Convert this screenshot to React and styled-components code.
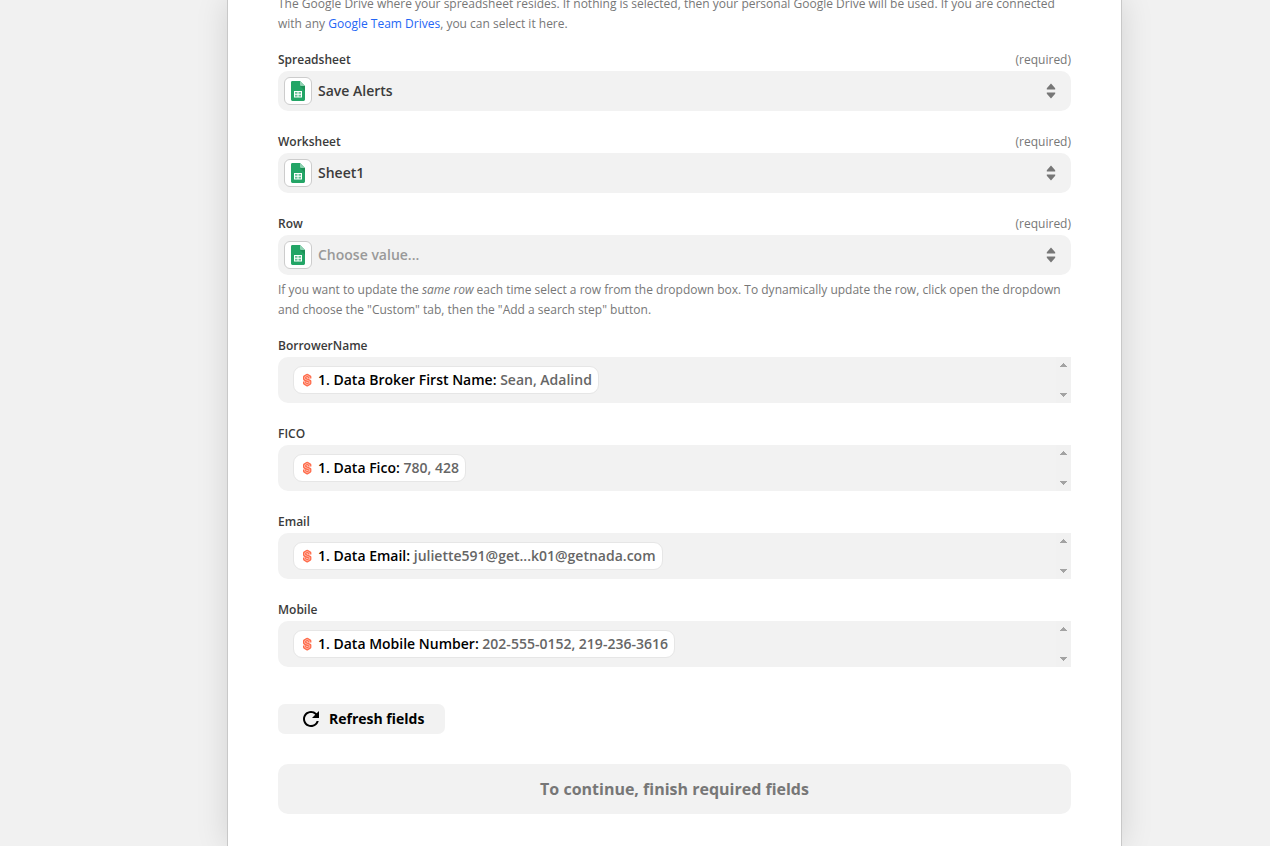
import React from "react";
import styled, { createGlobalStyle } from "styled-components";
import { MdRefresh } from "react-icons/md";

const GlobalStyle = createGlobalStyle`
  * { box-sizing: border-box; }
  body {
    margin: 0;
    background: #f1f1f1;
    font-family: "Open Sans", "Noto Sans", sans-serif;
    font-size: 14px;
  }
  button, select { font-family: inherit; }
`;

const Page = styled.div`
  display: flex;
  height: 100vh;
  overflow: hidden;
  padding: 0 148px 0 227px;
`;

const Card = styled.main`
  flex: 1;
  min-width: 0;
  min-height: 100vh;
  background: #fff;
  border: solid #c8c8c8;
  border-width: 0 1px;
  box-shadow: 0 0 30px rgba(0, 0, 0, 0.13);
  padding: 0 50px;
`;

const Form = styled.form`
  display: flex;
  flex-direction: column;
  gap: 16px;
  margin-top: -6px;
`;

const Field = styled.div`
  display: flex;
  flex-direction: column;
`;

const Help = styled.p`
  margin: 0;
  font-size: 12px;
  line-height: 20px;
  color: #777;
`;

const HelpLink = styled.a`
  color: #2466f5;
  text-decoration: none;
`;

const LabelRow = styled.div`
  display: flex;
  justify-content: space-between;
  height: 21px;
  font-size: 12px;
  line-height: 20px;
`;

const Label = styled.label`
  font-weight: 600;
  color: #3b3b3b;
`;

const Required = styled.span`
  color: #777;
`;

const SelectBox = styled.div`
  position: relative;
  height: 40px;
  margin-bottom: 5px;
`;

const Select = styled.select`
  appearance: none;
  display: block;
  width: 100%;
  height: 100%;
  border: 0;
  border-radius: 10px;
  background: #f2f2f2;
  padding: 0 40px 2px;
  font-size: 14px;
  font-weight: 600;
  color: ${(p) => (p.$empty ? "#999" : "#3b3b3b")};
`;

const AppIcon = styled.span`
  position: absolute;
  left: 6px;
  top: 6px;
  display: flex;
  align-items: center;
  justify-content: center;
  width: 28px;
  height: 28px;
  border: 1px solid #ccc;
  border-radius: 6px;
  background: #fff;
  pointer-events: none;
`;

const SortIcon = styled.svg`
  position: absolute;
  right: 15px;
  top: 12px;
  pointer-events: none;
`;

const TokenBox = styled.div`
  display: flex;
  justify-content: space-between;
  height: 46px;
  margin-bottom: 5px;
  border-radius: 10px 0 0 10px;
  background: #f2f2f2;
`;

const TokenInput = styled.div`
  flex: 1;
  display: flex;
  align-items: center;
  padding-left: 15px;
  outline: none;
`;

const Token = styled.span`
  display: flex;
  align-items: center;
  height: 28px;
  padding: 0 6px 0 8px;
  border: 1px solid #e6e6e6;
  border-radius: 9px;
  background: #fff;
  font-weight: 600;
  line-height: 20px;
  color: #666;
  white-space: pre;
`;

const TokenName = styled.span`
  margin-left: 6px;
  color: #000;
`;

const ScrollTrack = styled.div`
  display: flex;
  flex-direction: column;
  align-items: center;
  justify-content: space-between;
  width: 15px;
  padding: 6px 0;
  background: #f1f1f1;
`;

const RefreshButton = styled.button`
  align-self: flex-start;
  display: flex;
  align-items: center;
  gap: 6px;
  height: 30px;
  margin-top: 16px;
  padding: 0 21px;
  border: 0;
  border-radius: 7px;
  background: #f2f2f2;
  color: #000;
  font-size: 14px;
  font-weight: 700;
  line-height: 20px;
`;

const ContinueButton = styled.button`
  height: 50px;
  margin-top: 14px;
  border: 0;
  border-radius: 10px;
  background: #f2f2f2;
  color: #777;
  font-size: 16px;
  font-weight: 700;
`;

const SheetsLogo = () => (
  <svg width="14" height="20" viewBox="0 0 14 20" aria-hidden="true">
    <path d="M1.4 0H9l5 5v13.600a1.400 1.400 0 0 1-1.400 1.400H1.400A1.400 1.400 0 0 1 0 18.600V1.400A1.400 1.400 0 0 1 1.400 0z" fill="#23a566" />
    <path d="M9 5h5v5z" fill="#1c9156" />
    <path d="M9 0l5 5h-3.800A1.200 1.200 0 0 1 9 3.800z" fill="#8ed1b1" />
    <path
      fillRule="evenodd"
      d="M3 10h8v6.500H3zM4 11v1.700h2.500V11zM7.500 11v1.700H10V11zM4 13.800v1.700h2.500v-1.700zM7.500 13.800v1.700H10v-1.700z"
      fill="#fff"
    />
    <path d="M4 11h6v4.500H4z" fill="#fff" opacity=".3" />
  </svg>
);

const BrokerLogo = () => (
  <svg width="10" height="14" viewBox="0 0 10 14" fill="none" aria-hidden="true">
    <path d="M7.700 5.600V3.900L5.200 2.400 2.700 3.900v2.200L7.700 8.300v2L5.200 11.700 2.700 10.300V8.600" stroke="#ff6b4a" strokeWidth="3.400" strokeLinejoin="round" />
    <path d="M7.700 5.600V3.900L5.200 2.400 2.700 3.900v2.200L7.700 8.300v2L5.200 11.700 2.700 10.300V8.600" stroke="#ffd0c5" strokeWidth=".7" strokeLinejoin="round" />
  </svg>
);

function SelectField({ id, label, value, empty, children }) {
  return (
    <Field>
      <LabelRow>
        <Label htmlFor={id}>{label}</Label>
        <Required>(required)</Required>
      </LabelRow>
      <SelectBox>
        <Select id={id} $empty={empty}>
          <option>{value}</option>
        </Select>
        <AppIcon>
          <SheetsLogo />
        </AppIcon>
        <SortIcon width="10" height="16" viewBox="0 0 10 16" fill="#777" aria-hidden="true">
          <path d="M5 .5l4.200 4.700v1.300H.8V5.200zM5 15.500l4.200-4.700V9.500H.8v1.300z" />
        </SortIcon>
      </SelectBox>
      {children}
    </Field>
  );
}

function TokenField({ id, label, name, value }) {
  return (
    <Field>
      <LabelRow>
        <Label as="span" id={id}>{label}</Label>
      </LabelRow>
      <TokenBox>
        <TokenInput role="textbox" tabIndex={0} aria-labelledby={id}>
          <Token>
            <BrokerLogo />
            <TokenName>{name}: </TokenName>
            {value}
          </Token>
        </TokenInput>
        <ScrollTrack aria-hidden="true">
          <svg width="7" height="4" fill="#a3a3a3" shapeRendering="crispEdges">
            <path d="M3 0h1v1h1v1h1v1h1v1H0V3h1V2h1V1h1z" />
          </svg>
          <svg width="7" height="4" fill="#a3a3a3" shapeRendering="crispEdges">
            <path d="M0 0h7v1H6v1H5v1H4v1H3V3H2V2H1V1H0z" />
          </svg>
        </ScrollTrack>
      </TokenBox>
    </Field>
  );
}

const tokenFields = [
  { id: "borrower", label: "BorrowerName", name: "1. Data Broker First Name", value: "Sean, Adalind" },
  { id: "fico", label: "FICO", name: "1. Data Fico", value: "780, 428" },
  { id: "email", label: "Email", name: "1. Data Email", value: "juliette591@get...k01@getnada.com" },
  { id: "mobile", label: "Mobile", name: "1. Data Mobile Number", value: "202-555-0152, 219-236-3616" },
];

export default function App() {
  return (
    <>
      <GlobalStyle />
      <Page>
        <Card>
          <Form onSubmit={(e) => e.preventDefault()}>
            <Help>
              The Google Drive where your spreadsheet resides. If nothing is selected, then your personal Google
              Drive will be used. If you are connected with any <HelpLink href="#drives">Google Team Drives</HelpLink>,
              you can select it here.
            </Help>
            <SelectField id="spreadsheet" label="Spreadsheet" value="Save Alerts" />
            <SelectField id="worksheet" label="Worksheet" value="Sheet1" />
            <SelectField id="row" label="Row" value="Choose value..." empty>
              <Help>
                If you want to update the <em>same row</em> each time select a row from the dropdown box. To
                dynamically update the row, click open the dropdown and choose the "Custom" tab, then the "Add a
                search step" button.
              </Help>
            </SelectField>
            {tokenFields.map((f) => (
              <TokenField key={f.id} {...f} />
            ))}
            <RefreshButton type="button">
              <MdRefresh size={24} aria-hidden="true" />
              Refresh fields
            </RefreshButton>
            <ContinueButton type="submit">To continue, finish required fields</ContinueButton>
          </Form>
        </Card>
      </Page>
    </>
  );
}
